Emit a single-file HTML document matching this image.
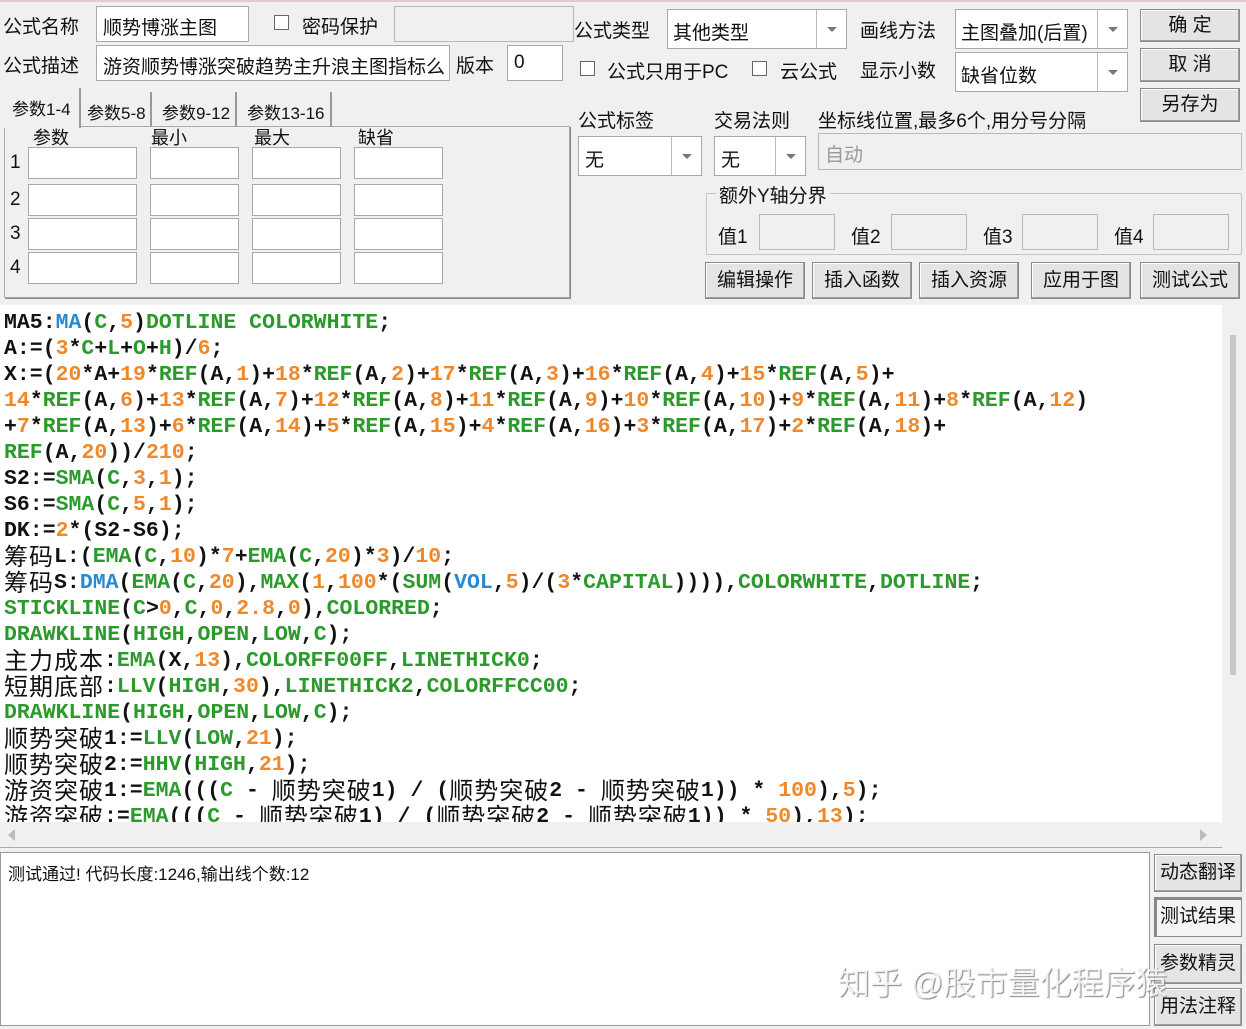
<!DOCTYPE html>
<html><head><meta charset="utf-8"><style>
*{box-sizing:border-box;margin:0;padding:0}
body{width:1246px;height:1029px;background:#f0f0f0;position:relative;overflow:hidden;font-family:"Liberation Sans","Noto Sans CJK SC",sans-serif;font-size:19px;color:#111}
.a{position:absolute;white-space:nowrap}
.in{position:absolute;background:#fff;border:1px solid #a8a8a8}
.dis{position:absolute;background:#f0f0f0;border:1px solid #b8b8b8}
.btn{position:absolute;background:#e4e4e4;border:1px solid #8a8a8a;box-shadow:inset -1px -1px 0 #a0a0a0,inset 1px 1px 0 #fff;text-align:center;font-size:19px}
.cb{position:absolute;width:15px;height:15px;background:#fff;border:1px solid #666}
.dd{position:absolute;top:0;right:0;bottom:0;width:30px;border-left:1px solid #bbb}
.dd:after{content:"";position:absolute;left:10px;top:50%;border:5px solid transparent;border-top:5px solid #777;margin-top:-2px}
#code{position:absolute;left:0;top:305px;width:1222px;height:517px;background:#fff;overflow:hidden;font-family:"Liberation Mono",monospace;font-weight:bold;font-size:21.5px;line-height:26px;padding:5px 0 0 4px}
#code div{white-space:pre;height:26px;overflow:visible}
.g{color:#2a9a2a}.o{color:#f0882a}.b{color:#2a8ad0}
.c{font-family:"Noto Sans CJK SC",sans-serif;font-weight:normal;font-size:24px;letter-spacing:1px;display:inline-block;height:26px;line-height:24px;vertical-align:top;margin-top:-1px}
.tab{position:absolute;font-size:17px;white-space:nowrap}
</style></head><body>
<div style="position:absolute;left:0;top:0;width:1246px;height:2px;background:#e8c8c8"></div>
<div class="a" style="left:3px;top:12px">公式名称</div>
<div class="in" style="left:96px;top:6px;width:153px;height:36px"><span class="a" style="left:6px;top:6px">顺势博涨主图</span></div>
<div class="cb" style="left:274px;top:15px"></div>
<div class="a" style="left:302px;top:12px">密码保护</div>
<div class="dis" style="left:394px;top:6px;width:180px;height:36px"></div>
<div class="a" style="left:3px;top:51px">公式描述</div>
<div class="in" style="left:96px;top:45px;width:354px;height:36px;overflow:hidden"><span class="a" style="left:6px;top:6px">游资顺势博涨突破趋势主升浪主图指标么</span></div>
<div class="a" style="left:456px;top:51px">版本</div>
<div class="in" style="left:507px;top:45px;width:56px;height:36px"><span class="a" style="left:6px;top:6px">0</span></div>

<div class="a" style="left:574px;top:16px">公式类型</div>
<div class="in" style="left:667px;top:9px;width:180px;height:40px"><span class="a" style="left:5px;top:8px">其他类型</span><div class="dd"></div></div>
<div class="a" style="left:860px;top:16px">画线方法</div>
<div class="in" style="left:955px;top:9px;width:173px;height:40px"><span class="a" style="left:5px;top:8px">主图叠加(后置)</span><div class="dd"></div></div>
<div class="btn" style="left:1140px;top:9px;width:100px;height:33px;line-height:31px">确 定</div>
<div class="cb" style="left:580px;top:61px"></div>
<div class="a" style="left:607px;top:57px">公式只用于PC</div>
<div class="cb" style="left:752px;top:61px"></div>
<div class="a" style="left:780px;top:57px">云公式</div>
<div class="a" style="left:860px;top:56px">显示小数</div>
<div class="in" style="left:955px;top:52px;width:173px;height:40px"><span class="a" style="left:5px;top:8px">缺省位数</span><div class="dd"></div></div>
<div class="btn" style="left:1140px;top:48px;width:100px;height:34px;line-height:32px">取 消</div>
<div class="btn" style="left:1140px;top:88px;width:100px;height:34px;line-height:32px">另存为</div>

<!-- tabs -->
<div style="position:absolute;left:4px;top:126px;width:566px;height:172px;border:1px solid #aaa;box-shadow:1px 1px 0 #888"></div>
<div class="a" style="left:4px;top:88px;width:77px;height:40px;background:#f0f0f0;border-right:2px solid #999"></div>
<div class="tab" style="left:12px;top:95px">参数1-4</div>
<div class="a" style="left:82px;top:92px;width:70px;height:34px;border-right:2px solid #999"></div>
<div class="tab" style="left:87px;top:99px">参数5-8</div>
<div class="a" style="left:154px;top:92px;width:83px;height:34px;border-right:2px solid #999"></div>
<div class="tab" style="left:162px;top:99px">参数9-12</div>
<div class="a" style="left:239px;top:92px;width:93px;height:34px;border-right:2px solid #999"></div>
<div class="tab" style="left:247px;top:99px">参数13-16</div>
<div class="a" style="left:30px;top:124px;font-size:18px">参数</div>
<div class="a" style="left:128px;top:124px;font-size:18px">最小</div>
<div class="a" style="left:214px;top:124px;font-size:18px">最大</div>
<div class="a" style="left:303px;top:124px;font-size:18px">缺省</div>
<div class="a" style="left:10px;top:152px">1</div><div class="a" style="left:10px;top:189px">2</div><div class="a" style="left:10px;top:223px">3</div><div class="a" style="left:10px;top:257px">4</div>
<div class="in" style="left:24px;top:147px;width:113px;height:32px"></div><div class="in" style="left:126px;top:147px;width:76px;height:32px"></div><div class="in" style="left:212px;top:147px;width:76px;height:32px"></div><div class="in" style="left:298px;top:147px;width:76px;height:32px"></div>
<div class="in" style="left:24px;top:184px;width:113px;height:32px"></div><div class="in" style="left:126px;top:184px;width:76px;height:32px"></div><div class="in" style="left:212px;top:184px;width:76px;height:32px"></div><div class="in" style="left:298px;top:184px;width:76px;height:32px"></div>
<div class="in" style="left:24px;top:218px;width:113px;height:32px"></div><div class="in" style="left:126px;top:218px;width:76px;height:32px"></div><div class="in" style="left:212px;top:218px;width:76px;height:32px"></div><div class="in" style="left:298px;top:218px;width:76px;height:32px"></div>
<div class="in" style="left:24px;top:252px;width:113px;height:32px"></div><div class="in" style="left:126px;top:252px;width:76px;height:32px"></div><div class="in" style="left:212px;top:252px;width:76px;height:32px"></div><div class="in" style="left:298px;top:252px;width:76px;height:32px"></div>
<style>.in[style*="width:113px"]{left:28px!important;width:109px!important}.in[style*="left:126px"]{left:150px!important;width:89px!important}.in[style*="left:212px"]{left:252px!important;width:89px!important}.in[style*="left:298px"]{left:354px!important;width:89px!important}
.a[style*="left:128px;top:124px"]{left:151px!important}.a[style*="left:214px;top:124px"]{left:254px!important}.a[style*="left:303px;top:124px"]{left:358px!important}.a[style*="left:30px;top:124px"]{left:33px!important}</style>

<div class="a" style="left:578px;top:106px">公式标签</div>
<div class="in" style="left:578px;top:136px;width:124px;height:40px"><span class="a" style="left:6px;top:8px">无</span><div class="dd"></div></div>
<div class="a" style="left:714px;top:106px">交易法则</div>
<div class="in" style="left:714px;top:136px;width:92px;height:40px"><span class="a" style="left:6px;top:8px">无</span><div class="dd"></div></div>
<div class="a" style="left:818px;top:106px">坐标线位置,最多6个,用分号分隔</div>
<div class="dis" style="left:818px;top:133px;width:424px;height:37px"><span class="a" style="left:6px;top:6px;color:#999">自动</span></div>
<div style="position:absolute;left:706px;top:193px;width:536px;height:62px;border:1px solid #c4c4c4"></div>
<div class="a" style="left:716px;top:181px;background:#f0f0f0;padding:0 3px">额外Y轴分界</div>
<div class="a" style="left:718px;top:222px">值1</div><div class="dis" style="left:759px;top:214px;width:76px;height:36px"></div>
<div class="a" style="left:851px;top:222px">值2</div><div class="dis" style="left:891px;top:214px;width:76px;height:36px"></div>
<div class="a" style="left:983px;top:222px">值3</div><div class="dis" style="left:1022px;top:214px;width:76px;height:36px"></div>
<div class="a" style="left:1114px;top:222px">值4</div><div class="dis" style="left:1153px;top:214px;width:76px;height:36px"></div>
<div class="btn" style="left:705px;top:262px;width:100px;height:37px;line-height:35px">编辑操作</div>
<div class="btn" style="left:812px;top:262px;width:100px;height:37px;line-height:35px">插入函数</div>
<div class="btn" style="left:919px;top:262px;width:100px;height:37px;line-height:35px">插入资源</div>
<div class="btn" style="left:1031px;top:262px;width:100px;height:37px;line-height:35px">应用于图</div>
<div class="btn" style="left:1140px;top:262px;width:100px;height:37px;line-height:35px">测试公式</div>

<div id="code">
<div>MA5:<span class="b">MA</span>(<span class="g">C</span>,<span class="o">5</span>)<span class="g">DOTLINE COLORWHITE</span>;</div>
<div>A:=(<span class="o">3</span>*<span class="g">C</span>+<span class="g">L</span>+<span class="g">O</span>+<span class="g">H</span>)/<span class="o">6</span>;</div>
<div>X:=(<span class="o">20</span>*A+<span class="o">19</span>*<span class="g">REF</span>(A,<span class="o">1</span>)+<span class="o">18</span>*<span class="g">REF</span>(A,<span class="o">2</span>)+<span class="o">17</span>*<span class="g">REF</span>(A,<span class="o">3</span>)+<span class="o">16</span>*<span class="g">REF</span>(A,<span class="o">4</span>)+<span class="o">15</span>*<span class="g">REF</span>(A,<span class="o">5</span>)+</div>
<div><span class="o">14</span>*<span class="g">REF</span>(A,<span class="o">6</span>)+<span class="o">13</span>*<span class="g">REF</span>(A,<span class="o">7</span>)+<span class="o">12</span>*<span class="g">REF</span>(A,<span class="o">8</span>)+<span class="o">11</span>*<span class="g">REF</span>(A,<span class="o">9</span>)+<span class="o">10</span>*<span class="g">REF</span>(A,<span class="o">10</span>)+<span class="o">9</span>*<span class="g">REF</span>(A,<span class="o">11</span>)+<span class="o">8</span>*<span class="g">REF</span>(A,<span class="o">12</span>)</div>
<div>+<span class="o">7</span>*<span class="g">REF</span>(A,<span class="o">13</span>)+<span class="o">6</span>*<span class="g">REF</span>(A,<span class="o">14</span>)+<span class="o">5</span>*<span class="g">REF</span>(A,<span class="o">15</span>)+<span class="o">4</span>*<span class="g">REF</span>(A,<span class="o">16</span>)+<span class="o">3</span>*<span class="g">REF</span>(A,<span class="o">17</span>)+<span class="o">2</span>*<span class="g">REF</span>(A,<span class="o">18</span>)+</div>
<div><span class="g">REF</span>(A,<span class="o">20</span>))/<span class="o">210</span>;</div>
<div>S2:=<span class="g">SMA</span>(<span class="g">C</span>,<span class="o">3</span>,<span class="o">1</span>);</div>
<div>S6:=<span class="g">SMA</span>(<span class="g">C</span>,<span class="o">5</span>,<span class="o">1</span>);</div>
<div>DK:=<span class="o">2</span>*(S2-S6);</div>
<div><span class="c">筹码</span>L:(<span class="g">EMA</span>(<span class="g">C</span>,<span class="o">10</span>)*<span class="o">7</span>+<span class="g">EMA</span>(<span class="g">C</span>,<span class="o">20</span>)*<span class="o">3</span>)/<span class="o">10</span>;</div>
<div><span class="c">筹码</span>S:<span class="b">DMA</span>(<span class="g">EMA</span>(<span class="g">C</span>,<span class="o">20</span>),<span class="g">MAX</span>(<span class="o">1</span>,<span class="o">100</span>*(<span class="g">SUM</span>(<span class="b">VOL</span>,<span class="o">5</span>)/(<span class="o">3</span>*<span class="g">CAPITAL</span>)))),<span class="g">COLORWHITE</span>,<span class="g">DOTLINE</span>;</div>
<div><span class="g">STICKLINE</span>(<span class="g">C</span>&gt;<span class="o">0</span>,<span class="g">C</span>,<span class="o">0</span>,<span class="o">2.8</span>,<span class="o">0</span>),<span class="g">COLORRED</span>;</div>
<div><span class="g">DRAWKLINE</span>(<span class="g">HIGH</span>,<span class="g">OPEN</span>,<span class="g">LOW</span>,<span class="g">C</span>);</div>
<div><span class="c">主力成本</span>:<span class="g">EMA</span>(X,<span class="o">13</span>),<span class="g">COLORFF00FF</span>,<span class="g">LINETHICK0</span>;</div>
<div><span class="c">短期底部</span>:<span class="g">LLV</span>(<span class="g">HIGH</span>,<span class="o">30</span>),<span class="g">LINETHICK2</span>,<span class="g">COLORFFCC00</span>;</div>
<div><span class="g">DRAWKLINE</span>(<span class="g">HIGH</span>,<span class="g">OPEN</span>,<span class="g">LOW</span>,<span class="g">C</span>);</div>
<div><span class="c">顺势突破</span>1:=<span class="g">LLV</span>(<span class="g">LOW</span>,<span class="o">21</span>);</div>
<div><span class="c">顺势突破</span>2:=<span class="g">HHV</span>(<span class="g">HIGH</span>,<span class="o">21</span>);</div>
<div><span class="c">游资突破</span>1:=<span class="g">EMA</span>(((<span class="g">C</span> - <span class="c">顺势突破</span>1) / (<span class="c">顺势突破</span>2 - <span class="c">顺势突破</span>1)) * <span class="o">100</span>),<span class="o">5</span>);</div>
<div><span class="c">游资突破</span>:=<span class="g">EMA</span>(((<span class="g">C</span> - <span class="c">顺势突破</span>1) / (<span class="c">顺势突破</span>2 - <span class="c">顺势突破</span>1)) * <span class="o">50</span>),<span class="o">13</span>);</div>
</div>
<!-- scrollbars -->
<div style="position:absolute;left:1222px;top:305px;width:24px;height:517px;background:#f0f0f0"><div style="position:absolute;left:8px;top:30px;width:6px;height:340px;background:#c8c8c8"></div></div>
<div style="position:absolute;left:0;top:822px;width:1222px;height:26px;background:#f0f0f0;border-bottom:1px solid #aaa"><div style="position:absolute;left:8px;top:7px;border:6px solid transparent;border-right:7px solid #bbb;border-left:0"></div><div style="position:absolute;left:1200px;top:7px;border:6px solid transparent;border-left:7px solid #bbb;border-right:0"></div></div>
<div style="position:absolute;left:0;top:852px;width:1150px;height:174px;background:#fff;border:1px solid #999"></div>
<div class="a" style="left:8px;top:860px;font-size:17px">测试通过! 代码长度:1246,输出线个数:12</div>
<div class="btn" style="left:1154px;top:854px;width:88px;height:38px;line-height:36px">动态翻译</div>
<div class="btn" style="left:1154px;top:897px;width:88px;height:40px;line-height:38px;background:#f4f4f4;box-shadow:inset 2px 2px 0 #888">测试结果</div>
<div class="btn" style="left:1154px;top:944px;width:88px;height:40px;line-height:38px">参数精灵</div>
<div class="btn" style="left:1154px;top:988px;width:88px;height:38px;line-height:36px">用法注释</div>
<div class="a" style="left:838px;top:958px;font-size:32px;color:rgba(255,255,255,.85);text-shadow:1px 1px 1px #888">知乎 @股市量化程序猿</div>
</body></html>
